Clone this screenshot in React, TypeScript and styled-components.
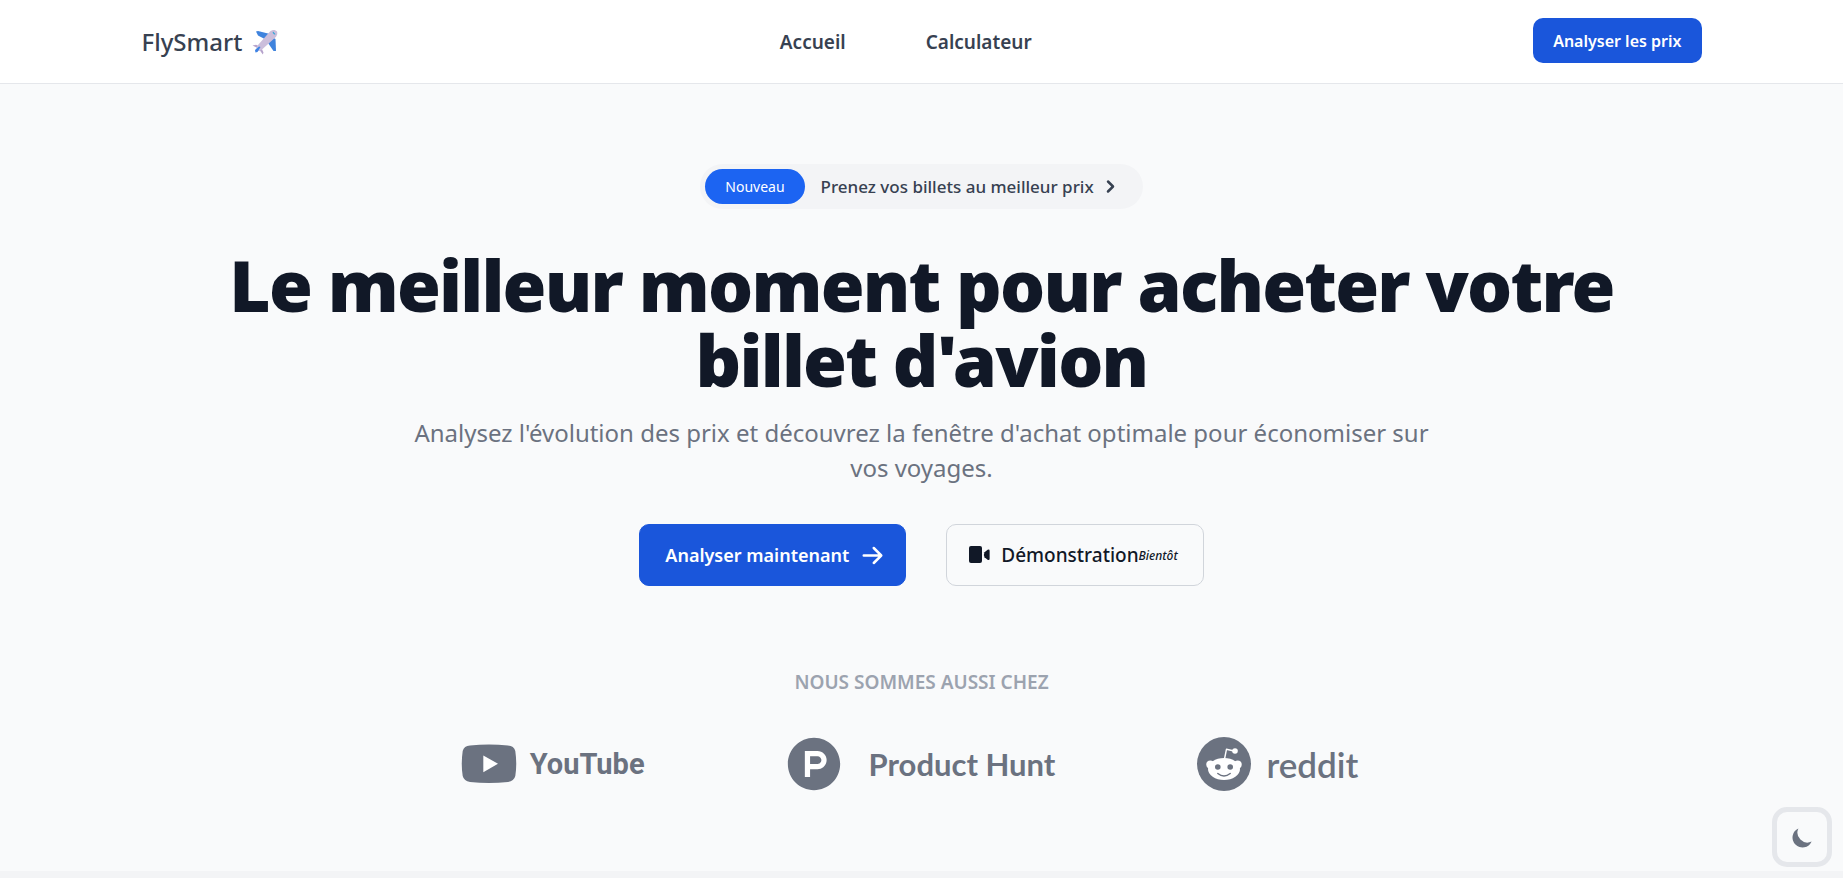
import React from "react";
import styled, { createGlobalStyle } from "styled-components";
import { FaProductHunt } from "react-icons/fa";

const GlobalStyle = createGlobalStyle`
  *, *::before, *::after { box-sizing: border-box; }
  body {
    margin: 0;
    background: #f3f4f6;
    color: #111827;
    font-family: "Segoe UI", "Noto Sans", "Open Sans", sans-serif;
    font-size: 18px;
  }
  a { color: inherit; text-decoration: none; }
  button { font-family: inherit; cursor: pointer; }
`;

const Header = styled.header`
  background: #ffffff;
  border-bottom: 1px solid #e5e7eb;
`;

const HeaderInner = styled.div`
  max-width: 1600px;
  margin: 0 auto;
  padding: 18px 20px 20px;
  display: flex;
  justify-content: space-between;
  align-items: center;
`;

const Brand = styled.a`
  display: flex;
  align-items: center;
  gap: 10px;
  padding-top: 2px;
  color: #374151;
  font-size: 24px;
  font-weight: 500;
  line-height: 43px;
`;

const Nav = styled.nav`
  display: flex;
  gap: 80px;
  padding-top: 2px;
`;

const NavLink = styled.a`
  color: #374151;
  font-size: 19px;
  font-weight: 600;
  line-height: 30px;
`;

const HeaderButton = styled.button`
  padding: 2px 20px 0;
  border: 0;
  border-radius: 10px;
  background: #1a56db;
  color: #ffffff;
  font-size: 16px;
  font-weight: 600;
  line-height: 43px;
`;

const Hero = styled.main`
  background: #f9fafb;
  padding: 80px 20px;
`;

const HeroInner = styled.div`
  max-width: 1560px;
  margin: 0 auto;
  display: flex;
  flex-direction: column;
  align-items: center;
  text-align: center;
`;

const Announcement = styled.a`
  display: flex;
  align-items: center;
  padding: 5px 20px 5px 5px;
  border-radius: 23px;
  background: #f3f4f6;
  color: #374151;
  font-size: 17px;
  font-weight: 500;
  line-height: 35px;

  svg { margin-left: 4px; }
`;

const Tag = styled.span`
  margin-right: 16px;
  padding: 0 20px;
  border-radius: 18px;
  background: #1c64f2;
  color: #ffffff;
  font-size: 14px;
  font-weight: 400;
`;

const Title = styled.h1`
  margin: 38px 0 18px;
  color: #111827;
  font-size: 71px;
  font-weight: 900;
  line-height: 75px;
  letter-spacing: -0.025em;
`;

const Lead = styled.p`
  max-width: 1040px;
  margin: 0;
  color: #6b7280;
  font-size: 24px;
  line-height: 35px;
`;

const Actions = styled.div`
  display: flex;
  gap: 40px;
  margin: 39px 0 81px;
`;

const ActionButton = styled.button<{ $primary?: boolean }>`
  display: flex;
  align-items: center;
  gap: ${(p) => (p.$primary ? 11 : 11)}px;
  height: 62px;
  padding: 0 ${(p) => (p.$primary ? 20 : 25)}px 0 ${(p) => (p.$primary ? 25 : 22)}px;
  border: 1px solid ${(p) => (p.$primary ? "#1a56db" : "#d1d5db")};
  border-radius: 10px;
  background: ${(p) => (p.$primary ? "#1a56db" : "transparent")};
  color: ${(p) => (p.$primary ? "#ffffff" : "#111827")};
  font-size: ${(p) => (p.$primary ? 18 : 19)}px;
  font-weight: ${(p) => (p.$primary ? 600 : 500)};
`;

const SoonLabel = styled.span`
  display: flex;
  align-items: center;
`;

const Soon = styled.em`
  font-size: 12px;
`;

const PartnersLabel = styled.p`
  margin: 0 0 40px;
  color: #9ca3af;
  font-size: 19px;
  font-weight: 600;
  line-height: 30px;
`;

const Partners = styled.ul`
  display: flex;
  justify-content: center;
  align-items: center;
  gap: 142px;
  margin: 0;
  padding: 0 24px 0 0;
  list-style: none;
`;

const Partner = styled.a<{ $gap: number }>`
  display: flex;
  align-items: center;
  gap: ${(p) => p.$gap}px;
  height: 54px;
  color: #6b7280;
`;

const Wordmark = styled.span<{ $family: string; $size: number; $weight?: number }>`
  font-family: ${(p) => p.$family}, sans-serif;
  font-size: ${(p) => p.$size}px;
  font-weight: ${(p) => p.$weight ?? 700};
  line-height: 54px;
`;

const Disc = styled.span`
  display: flex;
  border-radius: 50%;
  background: radial-gradient(#ffffff 60%, transparent 61%);
`;

const ThemeToggle = styled.button`
  position: fixed;
  right: 11px;
  bottom: 11px;
  width: 60px;
  height: 60px;
  display: flex;
  align-items: center;
  justify-content: center;
  padding: 0;
  border: 5px solid #e5e7eb;
  border-radius: 15px;
  background: #f9fafb;
  color: #6b7280;
`;

const Plane = () => (
  <svg width="26" height="26" viewBox="0 0 26 26" aria-hidden="true">
    <path d="M4 2.5 6 2l12 3-3.5 6L6 6.600Z" fill="#3f83dd" />
    <path d="M24 22 23.500 10 20 8l-5 4.500 6.500 9.500Z" fill="#3f83dd" />
    <path d="M.5 16.500 4 15.700l5 2.300 2.500 5.500-.7 2-4.300-6Z" fill="#b6a3cc" />
    <path d="M18 2.500c2.500-2.200 5.500-2 7 .1.900 2-.2 4.400-1.700 6L10 20.500c-2.600 1.800-4.400 1.800-5.200 1C4 20.500 4.500 18 6 16Z" fill="#cbbedb" />
    <path d="m21 2.500 2.600 2.700-1.500.2-1.400-1.600Z" fill="#2fa5d8" />
    <path d="m3 21 4-3.500 1.500.5-3 5-2 .5Z" fill="#3c83e5" />
  </svg>
);

const Chevron = () => (
  <svg width="25" height="25" viewBox="0 0 20 20" fill="currentColor" aria-hidden="true">
    <path fillRule="evenodd" clipRule="evenodd" d="M7.293 14.707a1 1 0 010-1.414L10.586 10 7.293 6.707a1 1 0 011.414-1.414l4 4a1 1 0 010 1.414l-4 4a1 1 0 01-1.414 0z" />
  </svg>
);

const Arrow = () => (
  <svg width="25" height="25" viewBox="0 0 20 20" fill="currentColor" aria-hidden="true">
    <path fillRule="evenodd" clipRule="evenodd" d="M10.293 3.293a1 1 0 011.414 0l6 6a1 1 0 010 1.414l-6 6a1 1 0 01-1.414-1.414L14.586 11H3a1 1 0 110-2h11.586l-4.293-4.293a1 1 0 010-1.414z" />
  </svg>
);

const Camera = () => (
  <svg width="21" height="18" viewBox="0 0 21 18" fill="currentColor" aria-hidden="true">
    <rect x="0" y="0" width="13" height="17" rx="2" />
    <path d="M15.500 6.300 18.600 3.800q2-.9 2 1V12.700q0 2-2 1L15.500 11.200Q14.300 8.700 15.500 6.300Z" />
  </svg>
);

const YouTubeMark = () => (
  <svg width="56" height="40" viewBox="0 0 56 40" aria-hidden="true">
    <path d="M9 1.600Q28-.4 47 1.600 53 2 54.300 7 56.200 20 54.300 32 53 37.200 47 38 28 40 9 38 3 37.200 1.700 32-.2 20 1.700 7 3 2 9 1.600Z" fill="currentColor" />
    <path d="M22.300 11.500 37 19.800 22.300 28.200Z" fill="#fff" />
  </svg>
);

const RedditMark = () => (
  <svg width="54" height="54" viewBox="0 0 54 54" aria-hidden="true">
    <circle cx="27" cy="27" r="27" fill="currentColor" />
    <g fill="#fff">
      <ellipse cx="27" cy="32" rx="16" ry="11" />
      <circle cx="13.300" cy="27.500" r="4" />
      <circle cx="40.700" cy="27.500" r="4" />
      <circle cx="38" cy="14" r="2.800" />
    </g>
    <path d="M27.500 22 29.500 12.200 37 14" fill="none" stroke="#fff" strokeWidth="1.400" strokeLinejoin="round" />
    <circle cx="20.800" cy="30" r="2.800" fill="currentColor" />
    <circle cx="33.200" cy="30" r="2.800" fill="currentColor" />
    <path d="M20.800 36.500Q27 41.500 33.200 36.500" fill="none" stroke="currentColor" strokeWidth="1.400" strokeLinecap="round" />
  </svg>
);

const Moon = () => (
  <svg width="25" height="25" viewBox="0 0 20 20" fill="currentColor" aria-hidden="true">
    <path d="M17.293 13.293A8 8 0 016.707 2.707a8.001 8.001 0 1010.586 10.586z" />
  </svg>
);

export default function App() {
  return (
    <>
      <GlobalStyle />
      <Header>
        <HeaderInner>
          <Brand href="#">
            FlySmart <Plane />
          </Brand>
          <Nav>
            <NavLink href="#accueil">Accueil</NavLink>
            <NavLink href="#calculateur">Calculateur</NavLink>
          </Nav>
          <HeaderButton type="button">Analyser les prix</HeaderButton>
        </HeaderInner>
      </Header>
      <Hero>
        <HeroInner>
          <Announcement href="#prix">
            <Tag>Nouveau</Tag>
            Prenez vos billets au meilleur prix
            <Chevron />
          </Announcement>
          <Title>Le meilleur moment pour acheter votre billet d'avion</Title>
          <Lead>
            Analysez l'évolution des prix et découvrez la fenêtre d'achat optimale pour économiser sur vos voyages.
          </Lead>
          <Actions>
            <ActionButton type="button" $primary>
              Analyser maintenant
              <Arrow />
            </ActionButton>
            <ActionButton type="button">
              <Camera />
              <SoonLabel>
                Démonstration<Soon>Bientôt</Soon>
              </SoonLabel>
            </ActionButton>
          </Actions>
          <PartnersLabel>NOUS SOMMES AUSSI CHEZ</PartnersLabel>
          <Partners>
            <li>
              <Partner href="#youtube" $gap={13}>
                <YouTubeMark />
                <Wordmark $family="Roboto" $size={29}>YouTube</Wordmark>
              </Partner>
            </li>
            <li>
              <Partner href="#producthunt" $gap={28}>
                <Disc>
                  <FaProductHunt size={54} />
                </Disc>
                <Wordmark $family="Lato" $size={31}>Product Hunt</Wordmark>
              </Partner>
            </li>
            <li>
              <Partner href="#reddit" $gap={15}>
                <RedditMark />
                <Wordmark $family="Lato" $size={35} $weight={600}>reddit</Wordmark>
              </Partner>
            </li>
          </Partners>
        </HeroInner>
      </Hero>
      <ThemeToggle type="button" aria-label="Activer le mode sombre">
        <Moon />
      </ThemeToggle>
    </>
  );
}
